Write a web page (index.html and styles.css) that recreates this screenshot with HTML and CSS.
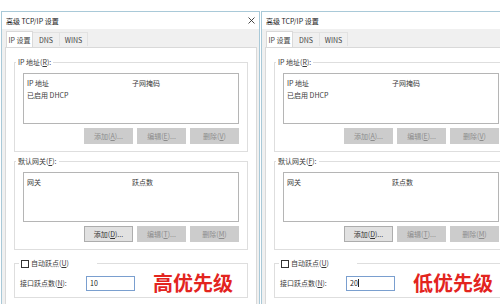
FILE: index.html
```html
<!DOCTYPE html>
<html lang="zh-CN">
<head>
    <meta charset="UTF-8">
    <meta name="viewport" content="width=device-width, initial-scale=1.0">
    <title>高级 TCP/IP 设置</title>
    <link rel="stylesheet" href="styles.css">
</head>
<body>

    <div class="desk">

        <!-- left window: high priority -->
        <div class="dialog">
            <div class="titlebar">
                <span>高级 TCP/IP 设置</span>
                <svg class="close" width="7" height="7" viewBox="0 0 7 7"><path d="M0.5 0.5L6.5 6.5M6.5 0.5L0.5 6.5" stroke="#333" stroke-width="0.9"/></svg>
            </div>
            <div class="tabs">
                <span class="tab active">IP 设置</span>
                <span class="tab">DNS</span>
                <span class="tab wins">WINS</span>
            </div>
            <div class="panel">
                <fieldset class="group">
                    <legend>IP 地址(<u>R</u>):</legend>
                    <div class="listbox">
                        <div class="row"><span class="col">IP 地址</span><span>子网掩码</span></div>
                        <div class="row"><span>已启用 DHCP</span></div>
                    </div>
                    <div class="buttons">
                        <button disabled>添加(<u>A</u>)...</button>
                        <button disabled>编辑(<u>E</u>)...</button>
                        <button disabled>删除(<u>V</u>)</button>
                    </div>
                </fieldset>

                <fieldset class="group gateway">
                    <legend>默认网关(<u>F</u>):</legend>
                    <div class="listbox">
                        <div class="row"><span class="col">网关</span><span>跃点数</span></div>
                    </div>
                    <div class="buttons">
                        <button>添加(<u>D</u>)...</button>
                        <button disabled>编辑(<u>T</u>)...</button>
                        <button disabled>删除(<u>M</u>)</button>
                    </div>
                </fieldset>

                <fieldset class="group metric">
                    <legend><span class="check"></span>自动跃点(<u>U</u>)</legend>
                    <div class="metricRow">
                        <span class="metricLabel">接口跃点数(<u>N</u>):</span>
                        <span class="input">10</span>
                        <span class="note">高优先级</span>
                    </div>
                </fieldset>
            </div>
        </div>

        <!-- right window: low priority -->
        <div class="dialog">
            <div class="titlebar">
                <span>高级 TCP/IP 设置</span>
                <svg class="close" width="7" height="7" viewBox="0 0 7 7"><path d="M0.5 0.5L6.5 6.5M6.5 0.5L0.5 6.5" stroke="#333" stroke-width="0.9"/></svg>
            </div>
            <div class="tabs">
                <span class="tab active">IP 设置</span>
                <span class="tab">DNS</span>
                <span class="tab wins">WINS</span>
            </div>
            <div class="panel">
                <fieldset class="group">
                    <legend>IP 地址(<u>R</u>):</legend>
                    <div class="listbox">
                        <div class="row"><span class="col">IP 地址</span><span>子网掩码</span></div>
                        <div class="row"><span>已启用 DHCP</span></div>
                    </div>
                    <div class="buttons">
                        <button disabled>添加(<u>A</u>)...</button>
                        <button disabled>编辑(<u>E</u>)...</button>
                        <button disabled>删除(<u>V</u>)</button>
                    </div>
                </fieldset>

                <fieldset class="group gateway">
                    <legend>默认网关(<u>F</u>):</legend>
                    <div class="listbox">
                        <div class="row"><span class="col">网关</span><span>跃点数</span></div>
                    </div>
                    <div class="buttons">
                        <button>添加(<u>D</u>)...</button>
                        <button disabled>编辑(<u>T</u>)...</button>
                        <button disabled>删除(<u>M</u>)</button>
                    </div>
                </fieldset>

                <fieldset class="group metric">
                    <legend><span class="check"></span>自动跃点(<u>U</u>)</legend>
                    <div class="metricRow">
                        <span class="metricLabel">接口跃点数(<u>N</u>):</span>
                        <span class="input">20<span class="caret"></span></span>
                        <span class="note">低优先级</span>
                    </div>
                </fieldset>
            </div>
        </div>

    </div>

</body>
</html>
```

FILE: styles.css
```css
body {
    margin: 0;
    width: 500px;
    height: 304px;
    overflow: hidden;
    background-color: #ffffff;
    font-family: "Noto Sans CJK SC", "Liberation Sans", sans-serif;
    font-size: 7px;
    color: #3a3a3a;
}

.desk {
    display: flex;
    gap: 1px;
    padding: 11px 0 0 1px;
}

.dialog {
    flex-shrink: 0;
    width: 257px;
    height: 300px;
    border: 1px solid #a9c9d8;
    border-bottom: none;
    background-color: #f0f0f0;
}

.titlebar {
    display: flex;
    align-items: center;
    justify-content: space-between;
    height: 17px;
    padding: 0 4px 0 4px;
    background-color: #ffffff;
    color: #222;
}

.close {
    margin-right: 0;
}

.tabs {
    display: flex;
    height: 15px;
    padding: 3px 0 0 4px;
}

.tab {
    display: flex;
    align-items: center;
    justify-content: center;
    width: 27px;
    height: 14px;
    border: 1px solid #e2e2e2;
    border-bottom: none;
    border-left: none;
    box-sizing: border-box;
    color: #444;
}

.tab.wins {
    width: 28px;
}

.tab.active {
    height: 16px;
    margin-top: -1px;
    border-left: 1px solid #d9d9d9;
    border-color: #d9d9d9;
    background-color: #ffffff;
    position: relative;
    z-index: 1;
}

.panel {
    margin: 0 2px 0 3px;
    height: 260px;
    padding: 10px 8px 0 8px;
    border: 1px solid #d9d9d9;
    background-color: #ffffff;
}

.group {
    margin: 0;
    padding: 6px 8px 7px 8px;
    border: 1px solid #dedede;
    min-width: 0;
}

.group legend {
    margin-left: -7px;
    padding: 0 2px;
    line-height: 9px;
}

.gateway {
    margin-top: 5px;
}

.listbox {
    height: 46px;
    padding: 3px 3px 0 3px;
    border: 1px solid #b5b5b5;
    background-color: #ffffff;
}

.gateway .listbox {
    height: 45px;
}

.row {
    display: flex;
    height: 12px;
    align-items: center;
}

.col {
    width: 105px;
}

.buttons {
    display: flex;
    justify-content: flex-end;
    gap: 4px;
    margin-top: 4px;
}

button {
    width: 49px;
    height: 16px;
    padding: 0;
    font-family: inherit;
    font-size: 7px;
    color: #333;
    background-color: #e1e1e1;
    border: 1px solid #adadad;
}

button:disabled {
    color: #8c8c8c;
    background-color: #cccccc;
    border-color: #cccccc;
}

.metric {
    margin-top: 9px;
    padding: 5px 8px 4px 8px;
}

.metric legend {
    display: flex;
    align-items: center;
    width: 74px;
    margin-left: -4px;
}

.check {
    width: 6px;
    height: 6px;
    margin-right: 2px;
    border: 1px solid #333;
    background-color: #ffffff;
}

.metricRow {
    display: flex;
    align-items: center;
    height: 20px;
    margin-left: -3px;
}

.metricLabel {
    width: 66px;
}

.input {
    display: flex;
    align-items: center;
    width: 44px;
    height: 13px;
    padding-left: 3px;
    border: 1px solid #7a9fcf;
    color: #222;
}

.caret {
    width: 0;
    height: 8px;
    border-left: 1px solid #222;
}

.note {
    margin-left: 18px;
    font-size: 20px;
    font-weight: bold;
    line-height: 20px;
    color: #e3241e;
}
```
